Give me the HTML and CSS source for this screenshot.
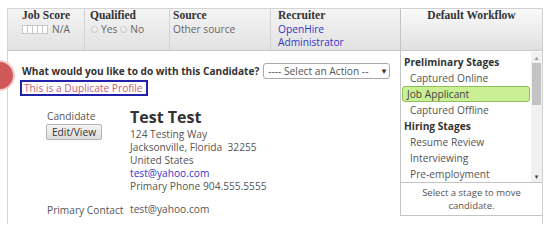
FILE: index.html
```html
<!DOCTYPE html>
<html>
<head>
<meta charset="utf-8">
<link rel="stylesheet" href="styles.css">
</head>
<body>
<div class="page">
  <div class="main">
    <div class="header">
      <div class="hcol c1">
        <div class="hlabel">Job Score</div>
        <div class="score"><span class="boxes"><i></i><i></i><i></i><i></i><i></i></span><span class="val">N/A</span></div>
      </div>
      <div class="hcol c2">
        <div class="hlabel">Qualified</div>
        <div class="radios"><span class="radio"></span><span class="val">Yes</span><span class="radio"></span><span class="val">No</span></div>
      </div>
      <div class="hcol c3">
        <div class="hlabel">Source</div>
        <div class="val">Other source</div>
      </div>
      <div class="hcol c4">
        <div class="hlabel">Recruiter</div>
        <div class="link">OpenHire</div>
        <div class="link">Administrator</div>
      </div>
    </div>
    <div class="content">
      <span class="dot"></span>
      <div class="action-row">
        <span class="question">What would you like to do with this Candidate?</span>
        <span class="select"><span>---- Select an Action --</span><span class="arrow">▾</span></span>
      </div>
      <div class="dup"><span class="dup-box">This is a Duplicate Profile</span></div>
      <div class="cand">
        <div class="cand-left">
          <div class="lbl">Candidate</div>
          <button class="btn">Edit/View</button>
        </div>
        <div class="cand-right">
          <div class="name">Test Test</div>
          <div class="line">124 Testing Way</div>
          <div class="line">Jacksonville, Florida&nbsp; 32255</div>
          <div class="line">United States</div>
          <div class="line link">test@yahoo.com</div>
          <div class="line">Primary Phone 904.555.5555</div>
        </div>
      </div>
      <div class="contact">
        <div class="cand-left lbl">Primary Contact</div>
        <div class="cand-right line">test@yahoo.com</div>
      </div>
    </div>
  </div>
  <div class="wf-col">
    <div class="wf">
      <div class="wf-head">Default Workflow</div>
      <div class="wf-body">
        <div class="wf-list">
          <div class="grp">Preliminary Stages</div>
          <div class="item">Captured Online</div>
          <div class="item sel">Job Applicant</div>
          <div class="item">Captured Offline</div>
          <div class="grp">Hiring Stages</div>
          <div class="item">Resume Review</div>
          <div class="item">Interviewing</div>
          <div class="item">Pre-employment</div>
        </div>
        <div class="sb">
          <div class="sb-up">▴</div>
          <div class="sb-track"><div class="sb-thumb"></div></div>
          <div class="sb-down">▾</div>
        </div>
      </div>
      <div class="wf-foot">Select a stage to move<br>candidate.</div>
    </div>
  </div>
</div>
</body>
</html>
```
FILE: styles.css
```css
* { box-sizing: border-box; }
html, body { margin: 0; padding: 0; background: #fff; overflow: hidden; }
body {
  padding: 8px 0 0 7px;
  font-family: "Open Sans", "DejaVu Sans", sans-serif;
  font-size: 10.2px;
  color: #555;
}
.page {
  display: flex;
  width: 536px;
  height: 216px;
}
.main {
  width: 393px;
  display: flex;
  flex-direction: column;
}
.header {
  height: 43px;
  display: flex;
  border-top: 1px solid #d4d4d4;
  border-bottom: 1px solid #c8c8c8;
  border-left: 1px solid #d4d4d4;
  background: linear-gradient(#f4f4f4, #e2e2e2);
}
.hcol {
  border-right: 1px solid #d2d2d2;
  line-height: 13.5px;
}
.hcol:last-child { border-right: none; }
.c1 { width: 77px; padding-left: 14px; }
.c2 { width: 85px; padding-left: 5px; }
.c3 { width: 101px; padding-left: 3px; }
.c4 { flex: 1; padding-left: 7px; }
.hlabel {
  font-family: "Liberation Serif", serif;
  font-weight: bold;
  font-size: 11.5px;
  color: #333;
}
.val { color: #666; }
.link { color: #3535c8; }
.score { display: flex; align-items: center; }
.boxes { display: flex; margin-right: 5px; }
.boxes i {
  width: 6px;
  height: 9px;
  background: #fff;
  border: 1px solid #c8c8c8;
  margin-right: -1px;
}
.radios { display: flex; align-items: center; }
.radio {
  width: 7px;
  height: 7px;
  border-radius: 50%;
  border: 1px solid #c6c6c6;
  background: linear-gradient(#f8f8f8, #e4e4e4);
  margin: 0 3px 0 1px;
}
.radios .val { margin-right: 2px; }
.content {
  flex: 1;
  border-left: 1px solid #d4d4d4;
  position: relative;
}
.dot {
  position: absolute;
  left: -24px;
  top: 9px;
  width: 31px;
  height: 31px;
  border-radius: 50%;
  background: #cf5858;
  border: 2px solid #f2cccc;
}
.action-row {
  display: flex;
  align-items: center;
  margin-top: 11px;
  padding-left: 14px;
  height: 17px;
}
.question {
  font-weight: bold;
  color: #333;
  margin-right: 4px;
  font-size: 10.1px;
}
.select {
  display: flex;
  align-items: center;
  justify-content: space-between;
  width: 127px;
  height: 16px;
  border: 1px solid #a8a8a8;
  border-radius: 3px;
  padding: 0 3px 0 4px;
  color: #555;
  background: #fff;
}
.arrow { font-size: 9px; color: #333; }
.dup { padding-left: 12px; margin-top: 1px; height: 16px; }
.dup-box {
  display: inline-block;
  border: 2px solid #2020a8;
  color: #c0607c;
  padding: 0 3px 0 2px;
  line-height: 12px;
}
.cand { display: flex; margin-top: 10px; }
.cand-left { width: 122px; padding-left: 38px; flex-shrink: 0; }
.lbl { color: #555; line-height: 14px; }
.cand-left .lbl { padding-left: 1px; margin-top: 3px; }
.btn {
  font-family: "Open Sans", sans-serif;
  font-size: 10.2px;
  color: #333;
  height: 16px;
  width: 56px;
  padding: 0;
  margin-top: 1px;
  border: 1px solid #b4b4b4;
  border-radius: 2px;
  background: linear-gradient(#f6f6f6, #dcdcdc);
}
.name {
  font-weight: bold;
  font-size: 16px;
  color: #333;
  line-height: 22px;
}
.line { line-height: 13px; }
.contact { display: flex; margin-top: 10px; line-height: 13px; }
.contact .lbl { padding-left: 39px; }
.wf-col {
  width: 143px;
  border-right: 1px solid #d0d0d0;
}
.wf {
  border-left: 1px solid #c4c4c4;
  border-top: 1px solid #d0d0d0;
  border-bottom: 1px solid #c4c4c4;
}
.wf-head {
  height: 42px;
  border-bottom: 1px solid #c8c8c8;
  background: linear-gradient(#fafafa, #e0e0e0);
  text-align: center;
  font-family: "Liberation Serif", serif;
  font-weight: bold;
  font-size: 11.5px;
  color: #333;
  line-height: 13.5px;
}
.wf-body {
  display: flex;
  height: 132px;
  border-bottom: 1px solid #c4c4c4;
}
.wf-list {
  flex: 1;
  overflow: hidden;
  padding: 3px 1px 0 1px;
  line-height: 16px;
}
.grp { font-weight: bold; color: #333; padding-left: 2px; }
.item { padding-left: 8px; color: #555; }
.sel {
  background: #c9f095;
  border: 1px solid #8ebf5c;
  border-radius: 3px;
  padding-left: 4px;
  line-height: 14px;
  color: #444;
}
.sb {
  width: 11px;
  display: flex;
  flex-direction: column;
  background: #f1f1f1;
  margin-top: 1px;
}
.sb-up, .sb-down {
  height: 11px;
  font-size: 7px;
  line-height: 11px;
  text-align: center;
  color: #999;
}
.sb-down { color: #444; }
.sb-track { flex: 1; }
.sb-thumb {
  margin: 0 1px;
  height: 42px;
  background: #c3c3c3;
}
.wf-foot {
  text-align: center;
  font-size: 9.5px;
  line-height: 13px;
  padding: 3px 0 3px;
  height: 32px;
  color: #555;
}
```
